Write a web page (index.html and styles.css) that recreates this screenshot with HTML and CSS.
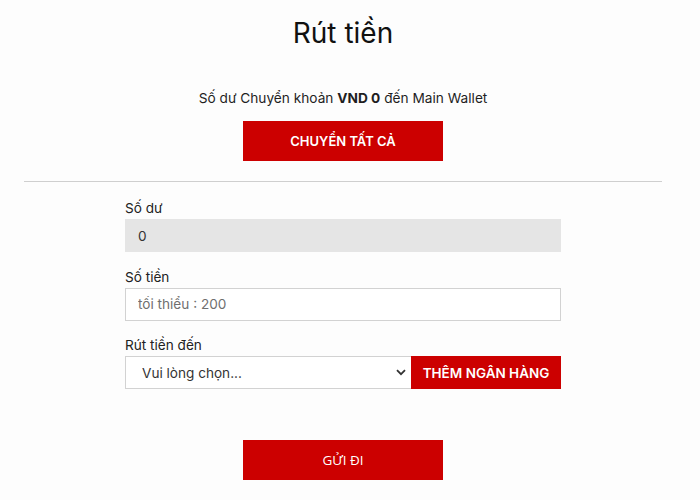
FILE: index.html
```html
<!DOCTYPE html>
<html lang="vi">
<head>
    <meta charset="UTF-8">
    <meta name="viewport" content="width=device-width, initial-scale=1.0">
    <title>Rút tiền</title>
    <link rel="stylesheet" href="styles.css">
</head>
<body>
    <div class="page">
        <h1>Rút tiền</h1>

        <p class="transfer-note">Số dư Chuyển khoản <b>VND 0</b> đến Main Wallet</p>
        <button class="btn btn-wide">CHUYỂN TẤT CẢ</button>

        <hr class="divider">

        <form class="withdraw-form">
            <div class="field">
                <label for="balance">Số dư</label>
                <input type="text" id="balance" value="0" readonly>
            </div>
            <div class="field">
                <label for="amount">Số tiền</label>
                <input type="text" id="amount" placeholder="tối thiểu : 200">
            </div>
            <div class="field">
                <label for="bank">Rút tiền đến</label>
                <div class="bank-row">
                    <div class="select-wrap">
                        <select id="bank">
                            <option>Vui lòng chọn...</option>
                        </select>
                        <svg class="chevron" width="10" height="7" viewBox="0 0 10 7">
                            <path d="M1 1.2 L5 5.2 L9 1.2" fill="none" stroke="#333" stroke-width="1.8"/>
                        </svg>
                    </div>
                    <button type="button" class="btn btn-bank">THÊM NGÂN HÀNG</button>
                </div>
            </div>

            <div class="submit-row">
                <button type="button" class="btn btn-wide btn-submit">GỬI ĐI</button>
            </div>
        </form>
    </div>
</body>
</html>
```

FILE: styles.css
```css
body {
    font-family: 'Inter', 'Noto Sans', sans-serif;
    background: #fdfdfd;
    color: #1f1f1f;
    margin: 0;
    padding: 0;
}
.page {
    width: 686px;
    padding-top: 17px;
    text-align: center;
}
h1 {
    margin: 0;
    font-size: 28px;
    line-height: 32px;
    font-weight: 400;
    color: #111;
}
.transfer-note {
    margin: 40px 0 14px;
    font-size: 13.7px;
    line-height: 18px;
}
.transfer-note b {
    font-weight: 700;
}
.btn {
    background: #cc0000;
    color: #fff;
    border: none;
    cursor: pointer;
    font-family: inherit;
    font-weight: 600;
    font-size: 13px;
    padding: 0;
}
.btn-wide {
    width: 200px;
    height: 40px;
}
.divider {
    margin: 20px 24px 0;
    border: none;
    border-top: 1px solid #cfcfcf;
}
.withdraw-form {
    width: 436px;
    margin: 18px auto 0;
    text-align: left;
}
.field {
    margin-bottom: 16.5px;
}
.field label {
    display: block;
    font-size: 13.6px;
    line-height: 16px;
    margin-bottom: 3px;
    color: #222;
}
.field input {
    box-sizing: border-box;
    width: 100%;
    height: 33px;
    padding: 0 12px;
    border: 1px solid #d2d2d2;
    background: #fff;
    font-family: inherit;
    font-size: 13.6px;
    color: #333;
    outline: none;
}
.field input[readonly] {
    background: #e5e5e5;
    border-color: #e5e5e5;
}
.field input::placeholder {
    color: #6f6f6f;
}
.bank-row {
    display: flex;
    height: 33px;
}
.select-wrap {
    position: relative;
    flex: 1;
}
.select-wrap select {
    appearance: none;
    box-sizing: border-box;
    width: 100%;
    height: 33px;
    padding: 0 16px;
    border: 1px solid #d2d2d2;
    border-right: none;
    background: #fff;
    font-family: inherit;
    font-size: 13.6px;
    color: #333;
}
.chevron {
    position: absolute;
    right: 5px;
    top: 13px;
}
.btn-bank {
    width: 150px;
    font-size: 13.5px;
    font-weight: 600;
}
.submit-row {
    text-align: center;
    margin-top: 51px;
}
.btn-submit {
    font-family: 'Open Sans', sans-serif;
    font-weight: 500;
    font-size: 13.5px;
}
```
